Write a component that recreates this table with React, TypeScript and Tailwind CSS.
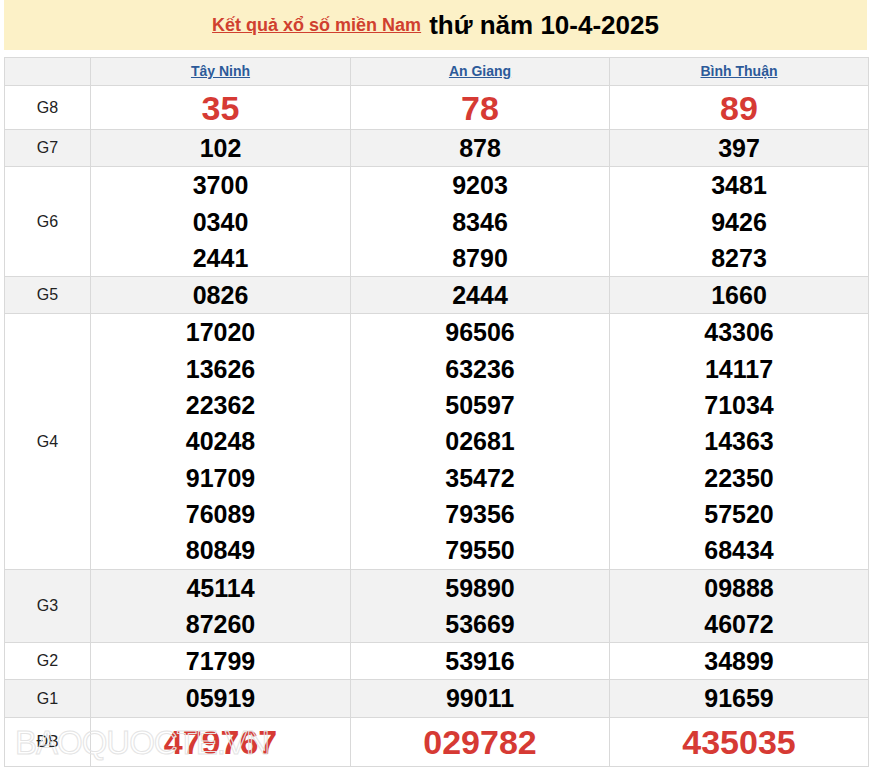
import React from "react";

type Row = { label: string; values: string[][]; big?: boolean; shaded?: boolean };

const provinces = ["Tây Ninh", "An Giang", "Bình Thuận"];

const rows: Row[] = [
  { label: "G8", values: [["35"], ["78"], ["89"]], big: true },
  { label: "G7", values: [["102"], ["878"], ["397"]], shaded: true },
  {
    label: "G6",
    values: [
      ["3700", "0340", "2441"],
      ["9203", "8346", "8790"],
      ["3481", "9426", "8273"],
    ],
  },
  { label: "G5", values: [["0826"], ["2444"], ["1660"]], shaded: true },
  {
    label: "G4",
    values: [
      ["17020", "13626", "22362", "40248", "91709", "76089", "80849"],
      ["96506", "63236", "50597", "02681", "35472", "79356", "79550"],
      ["43306", "14117", "71034", "14363", "22350", "57520", "68434"],
    ],
  },
  {
    label: "G3",
    values: [
      ["45114", "87260"],
      ["59890", "53669"],
      ["09888", "46072"],
    ],
    shaded: true,
  },
  { label: "G2", values: [["71799"], ["53916"], ["34899"]] },
  { label: "G1", values: [["05919"], ["99011"], ["91659"]], shaded: true },
  { label: "ĐB", values: [["479767"], ["029782"], ["435035"]], big: true },
];

export default function App() {
  return (
    <div className="relative h-[772px] w-[871px] bg-white px-1 font-['Liberation_Sans',Arial,sans-serif]">
      <div className="flex h-[50px] items-center justify-center gap-2 bg-[#fcf1c7]">
        <a className="text-[18px] font-bold text-[#d0402f] underline">Kết quả xổ số miền Nam</a>
        <span className="text-[26px] font-bold text-black">thứ năm 10-4-2025</span>
      </div>

      <table className="mt-[7px] w-[864px] table-fixed border-collapse border border-[#d9d9d9]">
        <colgroup>
          <col className="w-[86px]" />
          <col className="w-[260px]" />
          <col className="w-[259px]" />
          <col className="w-[259px]" />
        </colgroup>
        <thead>
          <tr className="h-[28px] bg-[#f2f2f2]">
            <th className="border border-[#d9d9d9]"></th>
            {provinces.map((name) => (
              <th key={name} className="border border-[#d9d9d9] text-[14px] font-bold text-[#2c5a99]">
                <a className="underline">{name}</a>
              </th>
            ))}
          </tr>
        </thead>
        <tbody>
          {rows.map((row) => (
            <tr
              key={row.label}
              className={`${row.shaded ? "bg-[#f2f2f2]" : "bg-white"} ${row.big ? (row.label === "ĐB" ? "h-[49px]" : "h-[44px]") : ""}`}
            >
              <td className="border border-[#d9d9d9] text-center text-[16px] text-[#222]">{row.label}</td>
              {row.values.map((list, i) => (
                <td key={i} className="border border-[#d9d9d9] p-0 text-center">
                  {list.map((num) =>
                    row.big ? (
                      <div key={num} className="text-[34px] leading-[40px] font-bold text-[#d63a34]">
                        {num}
                      </div>
                    ) : (
                      <div key={num} className="text-[25px] leading-[36.3px] font-bold text-black">
                        {num}
                      </div>
                    )
                  )}
                </td>
              ))}
            </tr>
          ))}
        </tbody>
      </table>

      <div className="pointer-events-none absolute left-[15px] top-[727px] text-[33px] leading-[32px] tracking-[-1px] text-transparent [-webkit-text-stroke:1px_#e4e4e4]">
        BAOQUOCTE.VN
      </div>
    </div>
  );
}
